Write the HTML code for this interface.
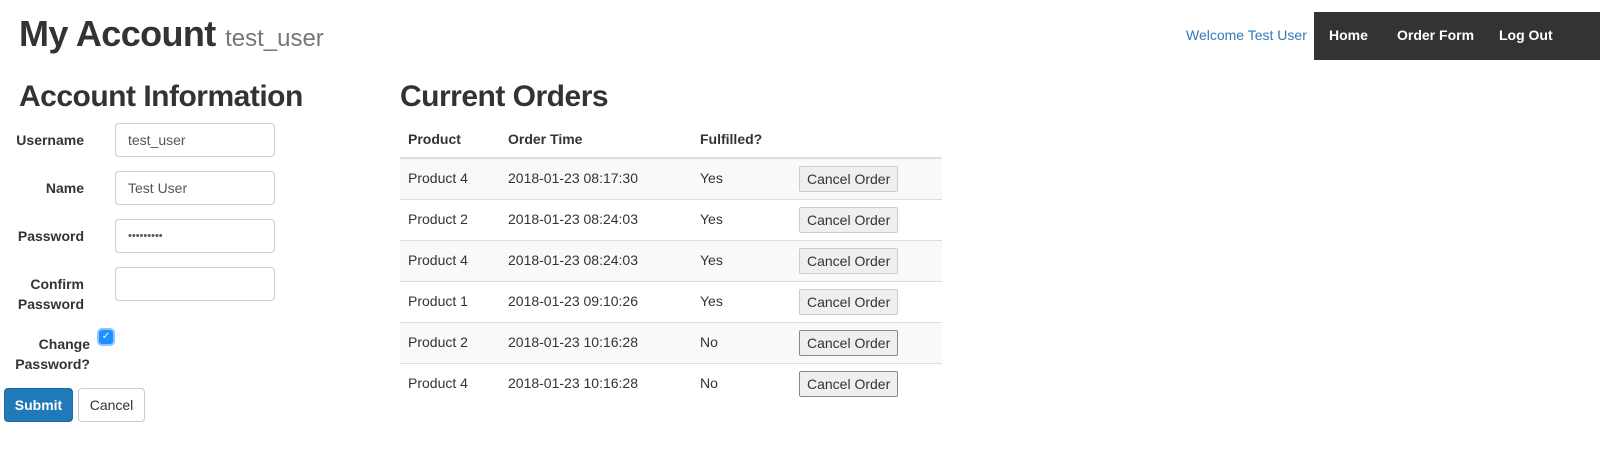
<!DOCTYPE html>
<html><head><style>
body{margin:0;width:1604px;height:464px;background:#fff;font-family:"Liberation Sans",Arial,sans-serif;color:#333;font-size:14px;position:relative;overflow:hidden}
.a{position:absolute}
h1{position:absolute;left:19px;top:12px;margin:0;font-size:36px;font-weight:bold;line-height:44px;letter-spacing:-0.6px}
h1 small{font-size:24px;color:#777;font-weight:400;letter-spacing:0}
h2{position:absolute;margin:0;font-size:30px;font-weight:bold;line-height:36px;letter-spacing:-0.5px}
.lbl{position:absolute;font-weight:bold;text-align:right;width:70px;left:14px;line-height:20px}
.inp{position:absolute;left:115px;border:1px solid #ccc;border-radius:4px;line-height:32px;padding-left:12px;box-sizing:border-box;width:160px;height:34px;color:#555}
.nav{position:absolute;left:1314px;top:12px;width:286px;height:48px;background:#333}
.nav span{position:absolute;top:15px;color:#fff;font-weight:bold;font-size:14px}
table{position:absolute;left:400px;top:120px;width:542px;border-collapse:collapse}
th{text-align:left;font-weight:bold;height:38px;border-bottom:2px solid #ddd;padding:0 8px;box-sizing:border-box}
td{height:41px;border-top:1px solid #ddd;padding:0 8px;vertical-align:top;padding-top:11px;box-sizing:border-box}
tr.s td{background:#f9f9f9}
.btn{display:inline-block;border:1px solid #ccc;background:#efefef;padding:4px 7px;font-size:14px;margin-top:-4px;border-radius:2px}
</style></head><body>
<h1>My Account <small>test_user</small></h1>
<div class="a" style="left:1186px;top:27px;color:#337ab7">Welcome Test User</div>
<div class="nav"><span style="left:15px">Home</span><span style="left:83px">Order Form</span><span style="left:185px">Log Out</span></div>
<h2 style="left:19px;top:79px">Account Information</h2>
<div class="lbl" style="top:130px">Username</div><div class="inp" style="top:123px">test_user</div>
<div class="lbl" style="top:178px">Name</div><div class="inp" style="top:171px">Test User</div>
<div class="lbl" style="top:226px">Password</div><div class="inp" style="top:219px;font-size:11px">•••••••••</div>
<div class="lbl" style="top:274px">Confirm Password</div><div class="inp" style="top:267px"></div>
<div class="lbl" style="top:334px;left:14px;width:76px">Change Password?</div>
<div class="a" style="left:99px;top:330px;width:14px;height:14px;background:#1e90ff;border-radius:3px;box-shadow:0 0 0 2px #8cc4ff;color:#fff;font-size:10px;line-height:14px;text-align:center">✓</div>
<div class="a" style="left:4px;top:388px;width:69px;height:34px;background:#2079b8;border:1px solid #1a6aa3;border-radius:4px;box-sizing:border-box;color:#fff;font-weight:bold;text-align:center;line-height:32px">Submit</div>
<div class="a" style="left:78px;top:388px;width:67px;height:34px;border:1px solid #ccc;border-radius:4px;box-sizing:border-box;text-align:center;line-height:32px">Cancel</div>
<h2 style="left:400px;top:79px">Current Orders</h2>
<table>
<tr><th style="width:100px">Product</th><th style="width:192px">Order Time</th><th style="width:99px">Fulfilled?</th><th></th></tr>
<tr class="s"><td>Product 4</td><td>2018-01-23 08:17:30</td><td>Yes</td><td><span class="btn">Cancel Order</span></td></tr>
<tr><td>Product 2</td><td>2018-01-23 08:24:03</td><td>Yes</td><td><span class="btn">Cancel Order</span></td></tr>
<tr class="s"><td>Product 4</td><td>2018-01-23 08:24:03</td><td>Yes</td><td><span class="btn">Cancel Order</span></td></tr>
<tr><td>Product 1</td><td>2018-01-23 09:10:26</td><td>Yes</td><td><span class="btn">Cancel Order</span></td></tr>
<tr class="s"><td>Product 2</td><td>2018-01-23 10:16:28</td><td>No</td><td><span class="btn" style="border-color:#888">Cancel Order</span></td></tr>
<tr><td>Product 4</td><td>2018-01-23 10:16:28</td><td>No</td><td><span class="btn" style="border-color:#888">Cancel Order</span></td></tr>
</table>
</body></html>
